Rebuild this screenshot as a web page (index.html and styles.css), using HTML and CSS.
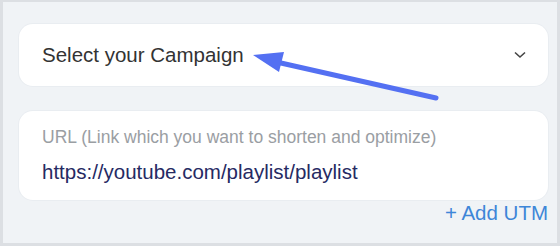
FILE: index.html
```html
<!DOCTYPE html>
<html>
<head>
<meta charset="utf-8">
<link rel="stylesheet" href="styles.css">
</head>
<body>
<div class="frame">
  <div class="card select">
    <span class="select-text">Select your Campaign</span>
    <svg class="chevron" width="12" height="8" viewBox="0 0 12 8"><path d="M1 1.5 L6 6 L11 1.5" fill="none" stroke="#444" stroke-width="1.6"/></svg>
  </div>
  <div class="card url">
    <div class="url-label">URL (Link which you want to shorten and optimize)</div>
    <div class="url-value">https://youtube.com/playlist/playlist</div>
  </div>
  <div class="utm-row"><span class="utm">+ Add UTM</span></div>
  <svg class="arrow" width="560" height="246" viewBox="0 0 560 246">
    <line x1="436" y1="98" x2="272" y2="61" stroke="#5470f2" stroke-width="5" stroke-linecap="round"/>
    <polygon points="253,55 284,52 279,72" fill="#5470f2"/>
  </svg>
</div>
</body>
</html>
```
FILE: styles.css
```css
html, body { margin: 0; padding: 0; }
body { width: 560px; height: 246px; overflow: hidden; font-family: "Liberation Sans", Arial, sans-serif; }
.frame {
  position: relative;
  box-sizing: border-box;
  width: 560px;
  height: 246px;
  border-style: solid;
  border-color: #dcdfe3;
  border-width: 2px 3px 3px 3px;
  background: #f0f3f6;
  padding: 22px 9px 0 16px;
  display: flex;
  flex-direction: column;
}
.card {
  background: #ffffff;
  border-radius: 14px;
  box-shadow: 0 0 0 1px #e9edf1;
}
.select {
  height: 62px;
  display: flex;
  align-items: center;
  justify-content: space-between;
  padding: 0 22px 0 23px;
}
.select-text { font-size: 20.5px; color: #333333; }
.chevron { display: block; }
.url {
  margin-top: 25px;
  height: 89px;
  box-sizing: border-box;
  padding: 15px 23px 0;
}
.url-label { font-size: 17.5px; color: #9a9ea3; line-height: 22px; }
.url-value { font-size: 20.5px; color: #262a63; line-height: 24px; margin-top: 12px; }
.utm-row { display: flex; justify-content: flex-end; margin-top: 1px; }
.utm { font-size: 20.5px; color: #3e86d8; line-height: 24px; }
.arrow { position: absolute; left: -3px; top: -2px; pointer-events: none; }
```
